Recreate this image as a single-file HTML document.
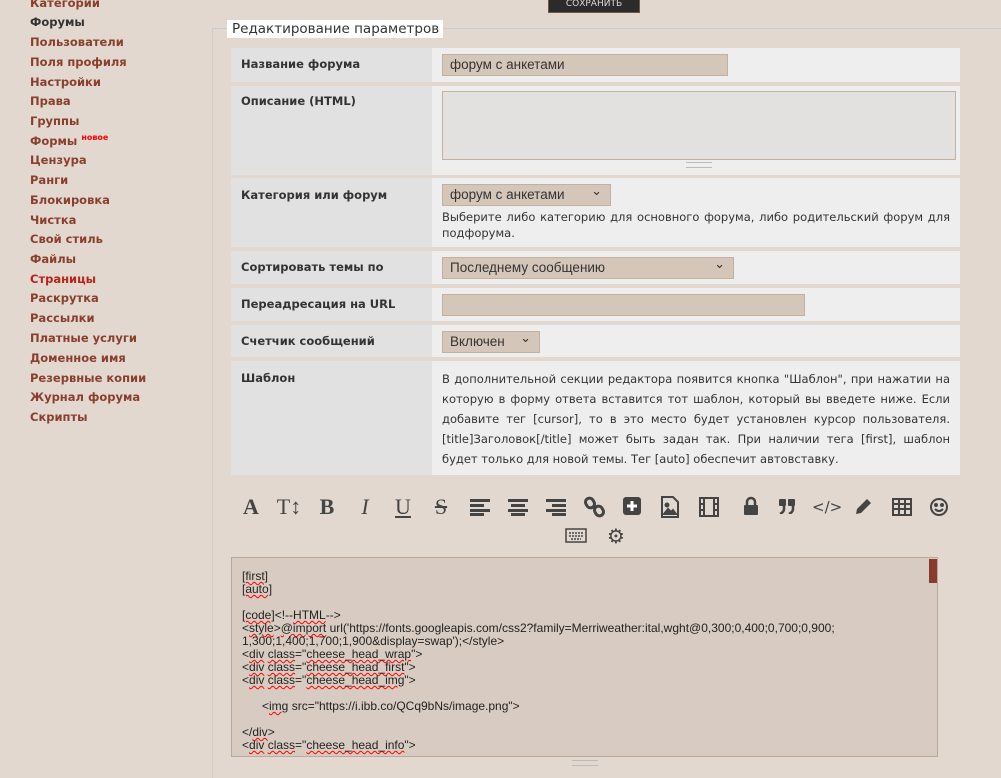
<!DOCTYPE html>
<html><head><meta charset="utf-8"><style>
body{margin:0;width:1001px;height:778px;background:#e2d8cf;font-family:"DejaVu Sans","Liberation Sans",sans-serif;position:relative;overflow:hidden}
.a{position:absolute}
.nav{position:absolute;left:30px;font-size:11.5px;font-weight:bold;color:#8a3f2e;white-space:nowrap}
.lab{position:absolute;left:231px;width:201px;background:#e1e1e1;font-size:11.5px;font-weight:bold;color:#333;box-sizing:border-box;padding-left:10px}
.val{position:absolute;left:432px;width:528px;background:#eeeeee}
.inp{position:absolute;background:#d5c6ba;border:1px solid #c3b09f;box-sizing:border-box;font-family:"Liberation Sans",sans-serif;font-size:13.5px;color:#333;padding-left:7px;line-height:20px}
.sel:after{content:"⌄";position:absolute;right:8px;top:-4px;font-size:13px}
.help{position:absolute;left:442px;width:508px;font-size:11.5px;color:#333;text-align:justify;line-height:20px}
.ic{position:absolute;top:494px;width:26px;height:26px;font-family:"Liberation Serif",serif;font-size:22px;color:#444;text-align:center;line-height:26px}
.code{position:absolute;left:242px;top:570px;font-family:"Liberation Sans",sans-serif;font-size:12px;line-height:13px;color:#222;white-space:pre}
.u{text-decoration:underline wavy red;text-decoration-thickness:1px}
</style></head><body>
<div class="a" style="left:548px;top:-6px;width:90px;height:17px;background:#2b2b2b;border:1px solid #6e5a40;color:#ddd;font-size:9px;text-align:center;line-height:18px">СОХРАНИТЬ</div>
<div class="nav" style="top:-4px">Категории</div>
<div class="nav" style="top:15px;color:#333">Форумы</div>
<div class="nav" style="top:35px">Пользователи</div>
<div class="nav" style="top:55px">Поля профиля</div>
<div class="nav" style="top:75px">Настройки</div>
<div class="nav" style="top:94px">Права</div>
<div class="nav" style="top:114px">Группы</div>
<div class="nav" style="top:133px">Формы <sup style="color:#f00;font-size:8px">новое</sup></div>
<div class="nav" style="top:153px">Цензура</div>
<div class="nav" style="top:173px">Ранги</div>
<div class="nav" style="top:193px">Блокировка</div>
<div class="nav" style="top:213px">Чистка</div>
<div class="nav" style="top:232px">Свой стиль</div>
<div class="nav" style="top:252px">Файлы</div>
<div class="nav" style="top:272px;color:#b8231a">Страницы</div>
<div class="nav" style="top:291px">Раскрутка</div>
<div class="nav" style="top:311px">Рассылки</div>
<div class="nav" style="top:331px">Платные услуги</div>
<div class="nav" style="top:351px">Доменное имя</div>
<div class="nav" style="top:371px">Резервные копии</div>
<div class="nav" style="top:390px">Журнал форума</div>
<div class="nav" style="top:410px">Скрипты</div>
<div class="a" style="left:212px;top:28px;width:789px;height:1px;background:#c9ccd0"></div>
<div class="a" style="left:212px;top:28px;width:1px;height:750px;background:#d4ccc4"></div>
<div class="a" style="left:227px;top:20px;width:216px;height:18px;background:#fff;font-size:13.5px;color:#333;line-height:18px;padding-left:5px;box-sizing:border-box">Редактирование параметров</div>

<div class="lab" style="top:48px;height:34px;line-height:32px">Название форума</div>
<div class="val" style="top:48px;height:34px"></div>
<div class="inp" style="left:442px;top:54px;width:286px;height:22px">форум с анкетами</div>

<div class="lab" style="top:86px;height:89px;padding-top:8px">Описание (HTML)</div>
<div class="val" style="top:86px;height:89px"></div>
<div class="inp" style="left:442px;top:91px;width:514px;height:69px;background:#e2e1df"></div>
<div class="a" style="left:686px;top:162px;width:26px;height:4px;border-top:1px solid #bbb;border-bottom:1px solid #bbb"></div>

<div class="lab" style="top:178px;height:69px;padding-top:10px">Категория или форум</div>
<div class="val" style="top:178px;height:69px"></div>
<div class="inp sel" style="left:442px;top:184px;width:169px;height:22px">форум с анкетами</div>
<div class="help" style="top:209px;line-height:16px">Выберите либо категорию для основного форума, либо родительский форум для подфорума.</div>

<div class="lab" style="top:251px;height:33px;line-height:33px">Сортировать темы по</div>
<div class="val" style="top:251px;height:33px"></div>
<div class="inp sel" style="left:442px;top:257px;width:292px;height:22px">Последнему сообщению</div>

<div class="lab" style="top:288px;height:33px;line-height:33px">Переадресация на URL</div>
<div class="val" style="top:288px;height:33px"></div>
<div class="inp" style="left:442px;top:294px;width:363px;height:22px"></div>

<div class="lab" style="top:325px;height:32px;line-height:33px">Счетчик сообщений</div>
<div class="val" style="top:325px;height:32px"></div>
<div class="inp sel" style="left:442px;top:331px;width:98px;height:22px">Включен</div>

<div class="lab" style="top:361px;height:114px;padding-top:10px">Шаблон</div>
<div class="val" style="top:361px;height:114px"></div>
<div class="help" style="top:369px">В дополнительной секции редактора появится кнопка "Шаблон", при нажатии на которую в форму ответа вставится тот шаблон, который вы введете ниже. Если добавите тег [cursor], то в это место будет установлен курсор пользователя. [title]Заголовок[/title] может быть задан так. При наличии тега [first], шаблон будет только для новой темы. Тег [auto] обеспечит автовставку.</div>

<div class="ic" style="left:238px;font-weight:bold">A</div>
<div class="ic" style="left:276px">T↕</div>
<div class="ic" style="left:314px;font-weight:bold">B</div>
<div class="ic" style="left:352px;font-style:italic">I</div>
<div class="ic" style="left:390px;text-decoration:underline">U</div>
<div class="ic" style="left:428px;text-decoration:line-through">S</div>
<svg class="a" style="left:468px;top:498px" width="24" height="18" fill="#444"><rect x="2" y="1" width="20" height="3"/><rect x="2" y="6" width="14" height="3"/><rect x="2" y="11" width="20" height="3"/><rect x="2" y="15" width="14" height="3"/></svg>
<svg class="a" style="left:506px;top:498px" width="24" height="18" fill="#444"><rect x="2" y="1" width="20" height="3"/><rect x="5" y="6" width="14" height="3"/><rect x="2" y="11" width="20" height="3"/><rect x="5" y="15" width="14" height="3"/></svg>
<svg class="a" style="left:544px;top:498px" width="24" height="18" fill="#444"><rect x="2" y="1" width="20" height="3"/><rect x="8" y="6" width="14" height="3"/><rect x="2" y="11" width="20" height="3"/><rect x="8" y="15" width="14" height="3"/></svg>
<svg class="a" style="left:584px;top:496px" width="22" height="22" fill="none" stroke="#444" stroke-width="3"><rect x="2" y="2" width="8" height="10" rx="4" transform="rotate(-30 6 7)"/><rect x="11" y="10" width="8" height="10" rx="4" transform="rotate(-30 15 15)"/></svg>
<svg class="a" style="left:622px;top:496px" width="20" height="20"><rect x="1" y="1" width="18" height="18" rx="3" fill="#444"/><path d="M10 5v10M5 10h10" stroke="#fff" stroke-width="3"/></svg>
<svg class="a" style="left:660px;top:496px" width="20" height="22" fill="none" stroke="#444" stroke-width="2"><path d="M2 1h11l5 5v15H2z"/><path d="M4 18l4-5 3 3 2-2 3 4z" fill="#444"/><circle cx="7" cy="9" r="1.5" fill="#444"/></svg>
<svg class="a" style="left:698px;top:496px" width="22" height="22" fill="none" stroke="#444" stroke-width="2"><rect x="2" y="2" width="18" height="18"/><path d="M6 2v18M16 2v18M2 8h4M2 14h4M16 8h4M16 14h4"/></svg>
<svg class="a" style="left:742px;top:496px" width="18" height="20" fill="#444"><path d="M5 9V6a4 4 0 0 1 8 0v3" fill="none" stroke="#444" stroke-width="2.5"/><rect x="2" y="9" width="14" height="10" rx="1"/></svg>
<svg class="a" style="left:778px;top:498px" width="18" height="16" fill="#444"><rect x="1" y="1" width="7" height="7" rx="1"/><path d="M6 6v5q0 3-4 5" stroke="#444" stroke-width="2.5" fill="none"/><rect x="10" y="1" width="7" height="7" rx="1"/><path d="M15 6v5q0 3-4 5" stroke="#444" stroke-width="2.5" fill="none"/></svg>
<div class="ic" style="left:812px;font-family:'DejaVu Sans';font-size:15px">&lt;/&gt;</div>
<svg class="a" style="left:853px;top:497px" width="20" height="20" fill="#444"><path d="M3 17l1-5L14 2l4 4L8 16z"/></svg>
<svg class="a" style="left:892px;top:498px" width="20" height="18" fill="none" stroke="#444" stroke-width="2"><rect x="1" y="1" width="18" height="16"/><path d="M1 6h18M1 11h18M7 1v16M13 1v16"/></svg>
<svg class="a" style="left:929px;top:497px" width="20" height="20" fill="none" stroke="#444" stroke-width="2"><circle cx="10" cy="10" r="8"/><path d="M6 12q4 4 8 0"/><circle cx="7" cy="8" r="1" fill="#444"/><circle cx="13" cy="8" r="1" fill="#444"/></svg>
<svg class="a" style="left:565px;top:528px" width="22" height="16" fill="none" stroke="#444" stroke-width="1.5"><rect x="1" y="1" width="20" height="13"/><path d="M4 5h14M4 8h14M6 11h10" stroke-dasharray="2 1"/></svg>
<div class="ic" style="left:603px;top:523px;font-family:'DejaVu Sans';font-size:20px">⚙</div>

<div class="a" style="left:231px;top:557px;width:707px;height:200px;background:#d8ccc2;border:1px solid #b8a999;box-sizing:border-box"></div>
<div class="a" style="left:929px;top:559px;width:8px;height:24px;background:#8b3a2e"></div>
<div class="a" style="left:572px;top:760px;width:26px;height:4px;border-top:1px solid #bbb;border-bottom:1px solid #bbb"></div>
<div class="code"><span class="u">[first]</span>
<span class="u">[auto]</span>

<span class="u">[code]</span>&lt;!--<span class="u">HTML</span>--&gt;
&lt;<span class="u">style</span>&gt;<span class="u">@import</span> url('https://fonts.googleapis.com/css2?family=Merriweather:ital,wght@0,300;0,400;0,700;0,900;
1,300;1,400;1,700;1,900&amp;display=swap');&lt;/style&gt;
&lt;<span class="u">div</span> <span class="u">class</span>="<span class="u">cheese_head_wrap</span>"&gt;
&lt;<span class="u">div</span> <span class="u">class</span>="<span class="u">cheese_head_first</span>"&gt;
&lt;<span class="u">div</span> <span class="u">class</span>="<span class="u">cheese_head_img</span>"&gt;

      &lt;<span class="u">img</span> src="https://i.ibb.co/QCq9bNs/image.png"&gt;

&lt;/<span class="u">div</span>&gt;
&lt;<span class="u">div</span> <span class="u">class</span>="<span class="u">cheese_head_info</span>"&gt;</div>
</body></html>
